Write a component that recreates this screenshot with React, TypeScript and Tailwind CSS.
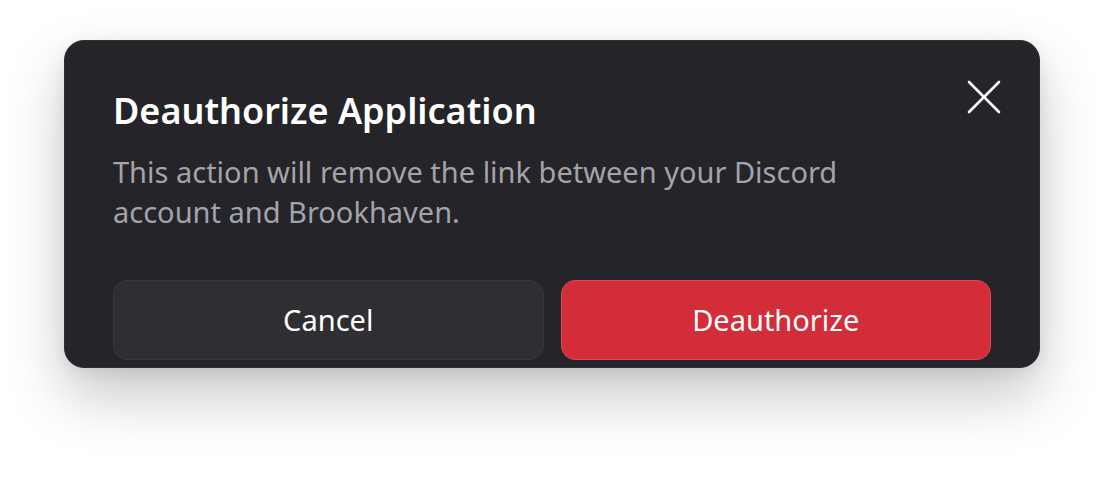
import React from "react";

export default function App() {
  return (
    <div className="w-[1104px] h-[496px] bg-white relative overflow-hidden" style={{ fontFamily: '"Noto Sans", "Open Sans", sans-serif' }}>
      <div className="absolute left-[64px] top-[40px] w-[976px] h-[328px] rounded-[20px] bg-[#242429] border border-[#2e2e34] shadow-[0_28px_60px_rgba(0,0,0,0.22),0_4px_16px_rgba(0,0,0,0.08)] flex flex-col px-[48px] pt-[46px]">
        <button className="absolute right-[38px] top-[39px] w-[34px] h-[34px] flex items-center justify-center">
          <svg width="34" height="34" viewBox="0 0 34 34" fill="none">
            <path d="M2 2L32 32M32 2L2 32" stroke="#ffffff" strokeWidth="2.6" strokeLinecap="round" />
          </svg>
        </button>
        <h1 className="text-[36px] leading-[48px] font-semibold text-white">Deauthorize Application</h1>
        <p className="mt-[17px] text-[29px] leading-[40px] text-[#a3a3ab] w-[780px]">
          This action will remove the link between your Discord account and Brookhaven.
        </p>
        <div className="mt-[48px] flex gap-[17px]">
          <button className="flex-1 h-[80px] rounded-[14px] bg-[#2f2e33] border border-[#38373d] text-white text-[29px] font-normal flex items-center justify-center">
            Cancel
          </button>
          <button className="flex-1 h-[80px] rounded-[14px] bg-[#d22d39] border border-[#de4a55] text-white text-[29px] font-normal flex items-center justify-center">
            Deauthorize
          </button>
        </div>
      </div>
    </div>
  );
}
